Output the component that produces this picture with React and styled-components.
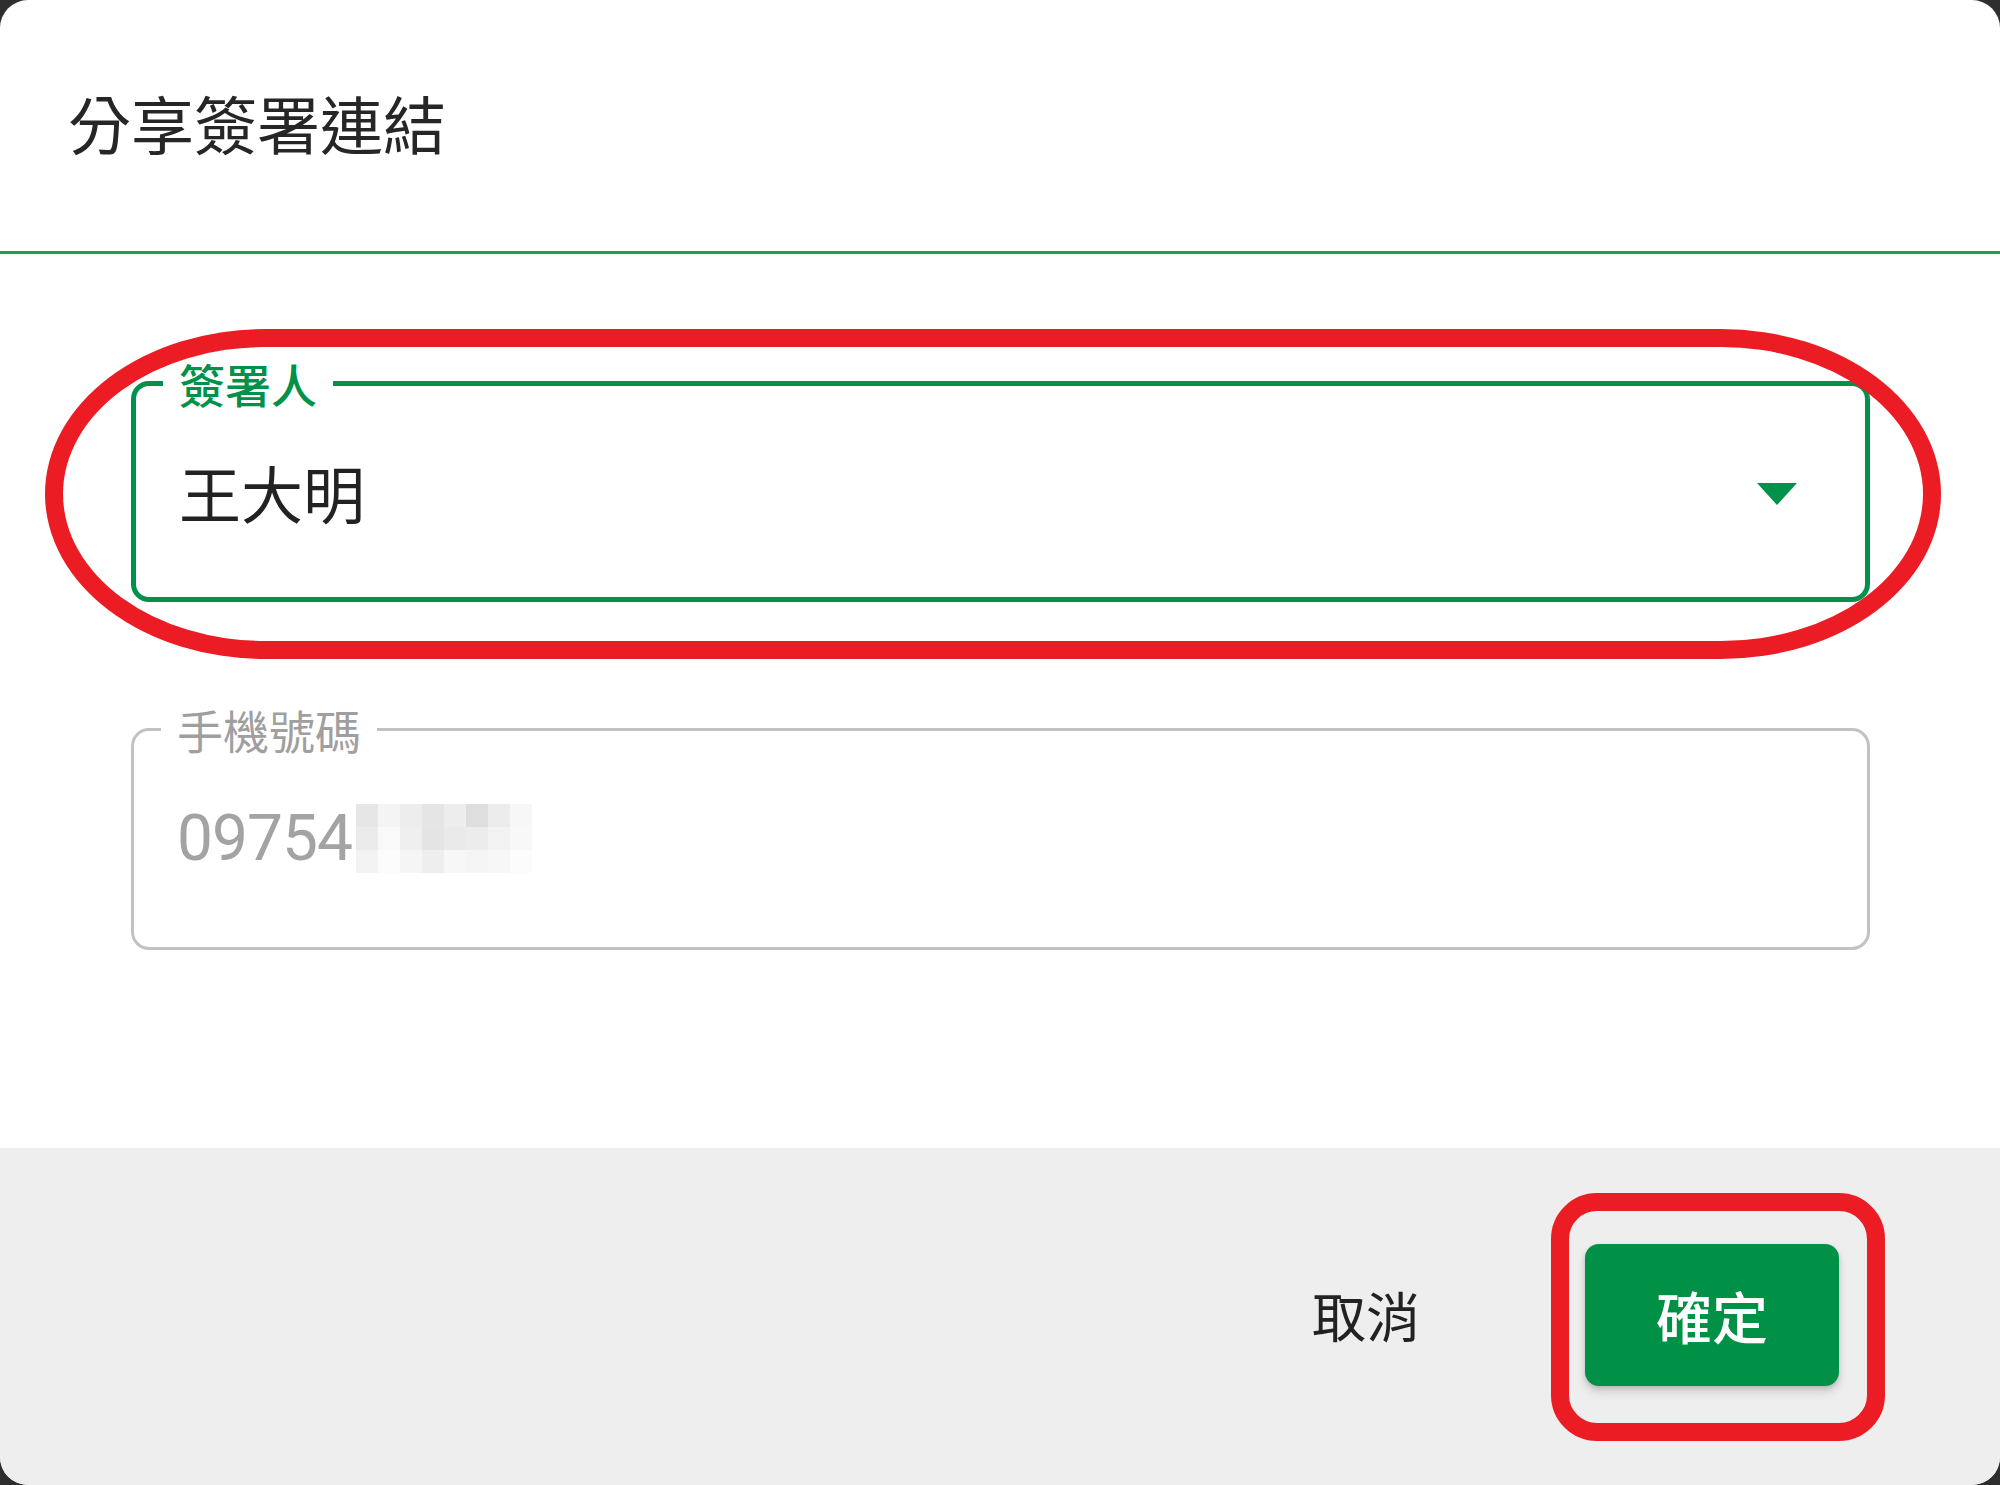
import React from 'react'
import styled, { createGlobalStyle } from 'styled-components'

const green = '#00914a'
const red = '#ec1c24'
const cjk = '"Noto Sans CJK TC", "Noto Sans", sans-serif'

const GlobalStyle = createGlobalStyle`
  html, body {
    margin: 0;
    padding: 0;
    background: #2e2e2e;
  }
  * { box-sizing: border-box; }
`

const Dialog = styled.div`
  position: relative;
  width: 2000px;
  height: 1485px;
  background: #fff;
  border-radius: 28px;
  overflow: hidden;
  display: flex;
  flex-direction: column;
  font-family: ${cjk};
`

const Header = styled.header`
  height: 254px;
  flex: none;
  display: flex;
  align-items: center;
  padding-left: 68px;
  padding-bottom: 8px;
  border-bottom: 3px solid #1f9d50;
  font-size: 63px;
  font-weight: 400;
  color: #262626;
`

const Content = styled.div`
  flex: 1;
  display: flex;
  flex-direction: column;
  gap: 103px;
  padding: 105px 130px 0 131px;
`

const Field = styled.fieldset`
  margin: 0;
  padding: 0 68px ${p => (p.$active ? '20px' : '24px')} 43px;
  border: ${p => (p.$active ? `5px solid ${green}` : '3px solid #c2c2c2')};
  border-radius: 18px;
  min-width: 0;
`

const Legend = styled.legend`
  margin-left: -16px;
  padding: 0 16px;
  font-size: 46px;
  line-height: 48px;
  font-weight: ${p => (p.$active ? 500 : 400)};
  color: ${p => (p.$active ? green : '#9f9f9f')};
`

const Row = styled.div`
  height: 170px;
  display: flex;
  align-items: center;
  justify-content: space-between;
`

const Value = styled.span`
  font-size: 62px;
  color: #222;
`

const Phone = styled.span`
  display: flex;
  align-items: center;
  font-family: Roboto, ${cjk};
  font-size: 64px;
  color: #a3a3a3;
  letter-spacing: -1px;
`

const Arrow = styled.svg`
  width: 40px;
  height: 22px;
  margin-top: 4px;
`

const Footer = styled.footer`
  height: 337px;
  flex: none;
  background: #eeeeee;
  display: flex;
  align-items: center;
  justify-content: flex-end;
  gap: 133px;
  padding: 0 161px 4px 0;
`

const TextButton = styled.button`
  border: none;
  background: none;
  padding: 0 32px;
  font-family: ${cjk};
  font-size: 54px;
  font-weight: 400;
  color: #222;
  cursor: pointer;
`

const PrimaryButton = styled.button`
  width: 254px;
  height: 142px;
  border: none;
  border-radius: 14px;
  background: #009146;
  color: #fff;
  font-family: ${cjk};
  font-size: 56px;
  font-weight: 500;
  box-shadow: 0 6px 10px rgba(0, 0, 0, 0.14), 0 2px 4px rgba(0, 0, 0, 0.12);
  cursor: pointer;
`

const Mark = styled.div`
  position: absolute;
  border: 18px solid ${red};
  pointer-events: none;
`

const FieldMark = styled(Mark)`
  left: 45px;
  top: 329px;
  width: 1896px;
  height: 330px;
  border-radius: 220px / 50%;
`

const ButtonMark = styled(Mark)`
  left: 1551px;
  top: 1193px;
  width: 334px;
  height: 248px;
  border-radius: 46px;
`

const mosaic = [
  ['#e6e6e6', '#f4f4f4', '#ededed', '#e5e5e5', '#ededed', '#dedede', '#ececec', '#f7f7f7'],
  ['#ebebeb', '#f9f9f9', '#efefef', '#e4e4e4', '#eaeaea', '#ececec', '#f3f3f3', '#f8f8f8'],
  ['#f3f3f3', '#fcfcfc', '#f5f5f5', '#eeeeee', '#f7f7f7', '#f5f5f5', '#f7f7f7', '#fcfcfc'],
]

const Mosaic = () => (
  <svg width="176" height="69" viewBox="0 0 176 69" style={{ marginLeft: 4 }}>
    {mosaic.map((row, r) =>
      row.map((c, i) => <rect key={`${r}-${i}`} x={i * 22} y={r * 23} width="22" height="23" fill={c} />)
    )}
  </svg>
)

const App = () => (
  <>
    <GlobalStyle />
    <Dialog>
      <Header>分享簽署連結</Header>
      <Content>
        <Field $active>
          <Legend $active>簽署人</Legend>
          <Row>
            <Value>王大明</Value>
            <Arrow viewBox="0 0 40 22">
              <path d="M0 0 H40 L20 22 Z" fill={green} />
            </Arrow>
          </Row>
        </Field>
        <Field>
          <Legend>手機號碼</Legend>
          <Row>
            <Phone>
              09754
              <Mosaic />
            </Phone>
          </Row>
        </Field>
      </Content>
      <Footer>
        <TextButton>取消</TextButton>
        <PrimaryButton>確定</PrimaryButton>
      </Footer>
      <FieldMark />
      <ButtonMark />
    </Dialog>
  </>
)

export default App
